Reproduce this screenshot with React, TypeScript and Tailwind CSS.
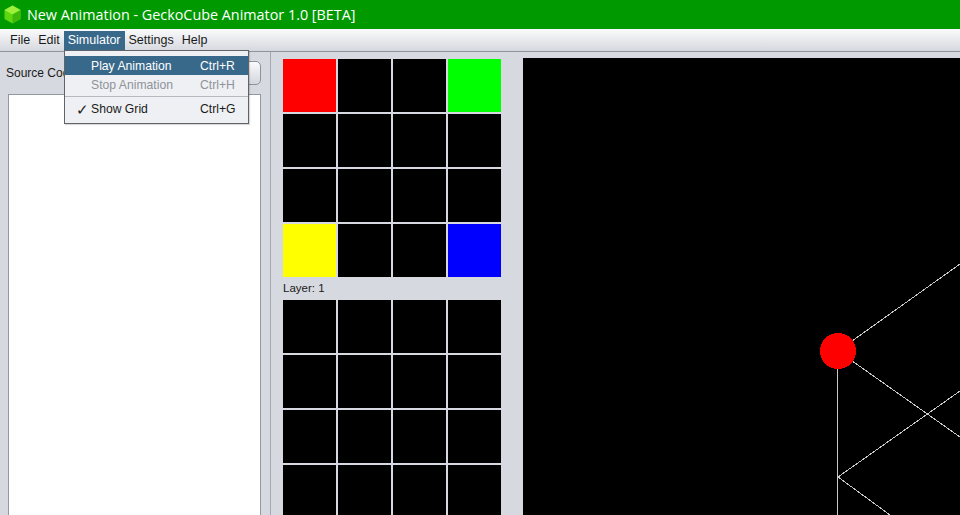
const lit: Record<number, string> = { 0: 'bg-[#ff0000]', 3: 'bg-[#00ff00]', 12: 'bg-[#ffff00]', 15: 'bg-[#0000ff]' };

function LedGrid({ colors }: { colors?: Record<number, string> }) {
    return (
        <div className="grid shrink-0 grid-cols-[repeat(4,53px)] auto-rows-[53px] gap-[2px]">
            {Array.from({ length: 16 }).map((_, i) => (
                <div key={i} className={colors?.[i] ?? 'bg-black'} />
            ))}
        </div>
    );
}

function MenuRow({ label, keys, active, disabled, check }: { label: string; keys: string; active?: boolean; disabled?: boolean; check?: boolean }) {
    const color = active ? 'bg-[#39698a] text-white' : disabled ? 'text-[#8f9399]' : 'text-[#1a1a1a]';
    return (
        <div className={`flex h-[19px] items-center pt-[2px] text-[12.2px] ${color}`}>
            <span className="w-[26px] pl-[11px] text-[15px] leading-none">{check ? '✓' : ''}</span>
            <span className="w-[109px]">{label}</span>
            <span>{keys}</span>
        </div>
    );
}

export default function App() {
    return (
        <div className="flex h-[515px] w-[960px] flex-col overflow-hidden bg-[#d6d9df] font-['Liberation_Sans',sans-serif] text-[12px] text-[#1a1a1a]">
            <div className="flex h-[29px] shrink-0 items-center gap-[6px] bg-[#009a00] pl-[4px] text-white">
                <svg width="17" height="19" viewBox="0 0 17 19">
                    <path d="M8.5 0.5 16.5 5 16.5 14 8.5 18.5 0.5 14 0.5 5Z" fill="#5ed610" />
                    <path d="M8.5 0.5 16.5 5 8.5 9.5 0.5 5Z" fill="#9cf03c" />
                    <path d="M8.5 9.5 16.5 5 16.5 14 8.5 18.5Z" fill="#3fb80a" />
                </svg>
                <span className="font-['Open_Sans',sans-serif] text-[14.37px]">New Animation - GeckoCube Animator 1.0 [BETA]</span>
            </div>

            <div className="flex h-[23px] shrink-0 items-center border-b border-[#8e939c] bg-gradient-to-b from-[#fbfbfc] to-[#d5d8de] pl-[4px] text-[12.5px]">
                <span className="pl-[6px] pr-[4px] pt-[1px]">File</span>
                <span className="px-[4px] pt-[1px]">Edit</span>
                <span className="flex h-[19px] items-center bg-[#39698a] px-[4px] pt-[1px] text-white">Simulator</span>
                <span className="px-[4px] pt-[1px]">Settings</span>
                <span className="pl-[4px] pt-[1px]">Help</span>
            </div>

            <div className="flex min-h-0 flex-1">
                <div className="flex w-[271px] shrink-0 flex-col border-r border-[#a4a8b0] pl-[8px] pr-[9px]">
                    <div className="flex h-[42px] shrink-0 items-center justify-between pb-[1px]">
                        <span className="-ml-[2px]">Source Code</span>
                        <div className="h-[24px] w-[40px] rounded-[5px] border border-[#8e939c] bg-gradient-to-b from-[#fbfbfc] to-[#d3d6dc]" />
                    </div>
                    <div className="flex-1 border-x border-t border-[#9298a1] bg-white" />
                </div>

                <div className="flex w-[252px] shrink-0 flex-col pl-[12px] pt-[7px]">
                    <LedGrid colors={lit} />
                    <div className="flex h-[23px] shrink-0 items-center pt-[1px] text-[11.5px]">Layer: 1</div>
                    <LedGrid />
                </div>

                <div className="mt-[6px] flex-1 bg-black">
                    <svg className="block h-full w-full" viewBox="523 58 437 457" stroke="#c8c8c8" fill="none" shapeRendering="crispEdges">
                        <path d="M838 351 960 264" />
                        <path d="M838 351 960 437" />
                        <path d="M837.5 351V515" />
                        <path d="M838 477 960 391" />
                        <path d="M838 477 890 515" />
                        <circle cx="838" cy="351" r="18" fill="#ff0000" stroke="none" />
                    </svg>
                </div>
            </div>

            <div className="absolute left-[64px] top-[50px] w-[185px] border border-[#5f646b] bg-[#eef0f3] pt-[5px] pb-[5px] shadow-[1px_1px_1px_rgba(0,0,0,0.15)]">
                <MenuRow label="Play Animation" keys="Ctrl+R" active />
                <MenuRow label="Stop Animation" keys="Ctrl+H" disabled />
                <div className="mb-[2px] mt-[2px] border-t border-[#b5b9bf]" />
                <MenuRow label="Show Grid" keys="Ctrl+G" check />
            </div>
        </div>
    );
}
